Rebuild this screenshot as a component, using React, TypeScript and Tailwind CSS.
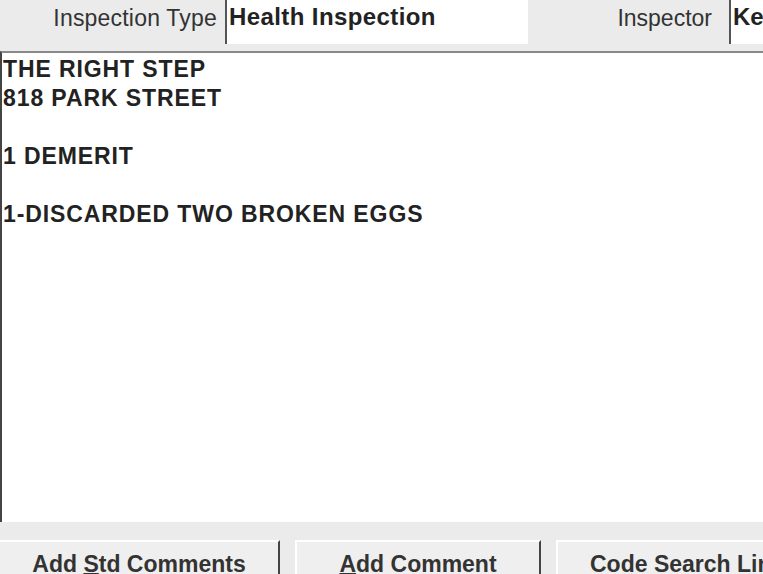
import React from "react";

const lines = [
  "THE RIGHT STEP",
  "818 PARK STREET",
  "",
  "1 DEMERIT",
  "",
  "1-DISCARDED TWO BROKEN EGGS",
];

export default function App() {
  return (
    <div
      className="w-[763px] h-[574px] overflow-hidden bg-[#ebebeb] flex flex-col text-[#222]"
      style={{ fontFamily: '"Liberation Sans", Arial, sans-serif' }}
    >
      {/* Header fields */}
      <div className="h-[51px] flex items-start shrink-0">
        <div className="w-[217px] h-[44px] flex items-start justify-end pt-[4px] leading-[28px] text-[23px] tracking-[0.2px] text-[#333]">
          Inspection Type
        </div>
        <div className="ml-[8px] w-[303px] h-[44px] bg-white border-l-2 border-[#555] flex items-start pt-[3px] pl-[2px] leading-[28px] text-[24px] tracking-[0.4px] font-bold">
          Health Inspection
        </div>
        <div className="w-[184px] h-[44px] flex items-start justify-end pt-[4px] leading-[28px] text-[23px] text-[#333]">
          Inspector
        </div>
        <div className="ml-[17px] flex-1 h-[44px] bg-white border-l-2 border-[#555] flex items-start pt-[3px] pl-[2px] leading-[28px] text-[24px] font-bold overflow-hidden whitespace-nowrap">
          Kelly
        </div>
      </div>

      {/* Comment text */}
      <div className="h-[471px] shrink-0 bg-white border-t-2 border-[#888] border-l-2 border-l-[#444] pt-[2px] pl-[1px]">
        {lines.map((l, i) => (
          <div key={i} className="h-[29px] leading-[29px] text-[23px] font-bold tracking-[0.9px] whitespace-pre">
            {l}
          </div>
        ))}
      </div>

      {/* Buttons */}
      <div className="flex-1 pt-[18px] flex gap-[15px]">
        <button className="w-[280px] h-full bg-[#efefef] border-t-2 border-white border-r-2 border-r-[#444] flex items-start justify-center pt-[8px] leading-[28px] text-[23px] font-bold text-[#333]">
          <span>
            Add <span className="underline underline-offset-[1px] decoration-2">S</span>td Comments
          </span>
        </button>
        <button className="w-[246px] h-full bg-[#efefef] border-t-2 border-l-2 border-white border-r-2 border-r-[#444] flex items-start justify-center pt-[8px] leading-[28px] text-[23px] font-bold text-[#333]">
          <span>
            <span className="underline underline-offset-[1px] decoration-2">A</span>dd Comment
          </span>
        </button>
        <button className="flex-1 h-full bg-[#efefef] border-t-2 border-l-2 border-white flex items-start justify-start pl-[32px] pt-[8px] leading-[28px] text-[23px] font-bold text-[#333] whitespace-nowrap overflow-hidden">
          Code Search Link
        </button>
      </div>
    </div>
  );
}
